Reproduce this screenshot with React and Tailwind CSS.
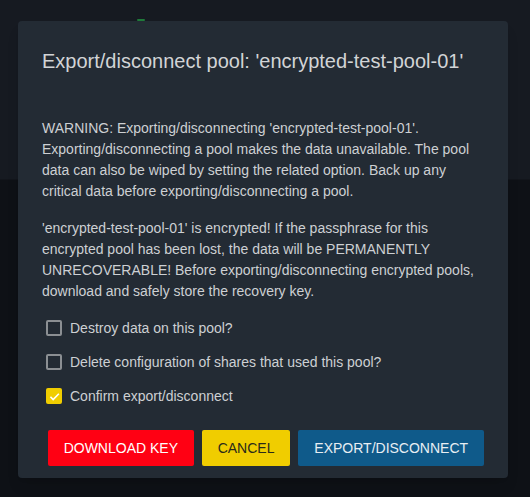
export default function App() {
  const options = [
    { label: 'Destroy data on this pool?', checked: false },
    { label: 'Delete configuration of shares that used this pool?', checked: false },
    { label: 'Confirm export/disconnect', checked: true },
  ]

  return (
    <div
      className="relative w-[530px] h-[497px] overflow-hidden bg-[#0e1116]"
      style={{ fontFamily: '"Liberation Sans", Arial, sans-serif' }}
    >
      {/* page behind the overlay */}
      <div className="h-[180px] bg-[#161a21] border-b border-[#12151b]" />
      <div className="absolute left-[137px] top-[19px] w-[8px] h-[2px] rounded-full bg-[#1f7a3a]" />

      {/* dialog */}
      <div className="absolute left-[18px] top-[21px] w-[490px] h-[457px] rounded bg-[#232b34] shadow-lg px-6 pt-6 pb-3 flex flex-col">
        <h2 className="text-[20px] leading-8 text-[#d2d4d6] font-normal">
          Export/disconnect pool: 'encrypted-test-pool-01'
        </h2>

        <div className="mt-[41px] text-sm leading-[21px] text-[#cdd0d3]">
          <p>
            WARNING: Exporting/disconnecting 'encrypted-test-pool-01'.
            Exporting/disconnecting a pool makes the data unavailable. The pool
            data can also be wiped by setting the related option. Back up any
            critical data before exporting/disconnecting a pool.
          </p>
          <p className="mt-4">
            'encrypted-test-pool-01' is encrypted! If the passphrase for this
            encrypted pool has been lost, the data will be PERMANENTLY
            UNRECOVERABLE! Before exporting/disconnecting encrypted pools,
            download and safely store the recovery key.
          </p>
        </div>

        <div className="mt-[9px] flex flex-col">
          {options.map((opt, index) => (
            <label key={index} className="h-[34px] flex items-center gap-2 pl-1 text-sm text-[#cdd0d3]">
              {opt.checked ? (
                <span className="w-4 h-4 rounded-[2px] bg-[#f0cd00] flex items-center justify-center">
                  <svg viewBox="0 0 24 24" className="w-[13px] h-[13px]" fill="none" stroke="white" strokeWidth={3}>
                    <path d="M4.5 12.5l5 5L20 7" />
                  </svg>
                </span>
              ) : (
                <span className="w-4 h-4 rounded-[2px] border-2 border-[#8b8f93]" />
              )}
              {opt.label}
            </label>
          ))}
        </div>

        <div className="mt-auto flex gap-2 pl-[6px]">
          <button className="h-9 w-[146px] rounded-[2px] bg-[#ff0013] text-white text-sm uppercase">
            Download Key
          </button>
          <button className="h-9 w-[89px] rounded-[2px] bg-[#f0cd00] text-[#2a2a1a] text-sm uppercase">
            Cancel
          </button>
          <button className="h-9 w-[186px] rounded-[2px] bg-[#0f5a8a] text-[#e8eef3] text-sm uppercase">
            Export/Disconnect
          </button>
        </div>
      </div>
    </div>
  )
}
